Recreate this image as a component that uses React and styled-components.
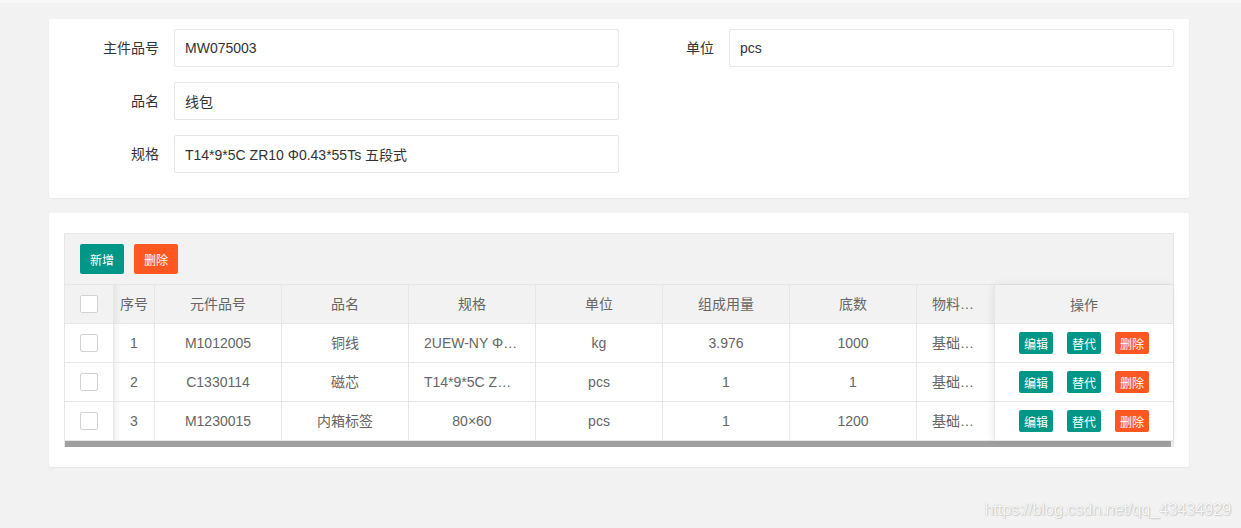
import React from "react";
import styled, { createGlobalStyle } from "styled-components";

const GlobalStyle = createGlobalStyle`
  * { box-sizing: border-box; }
  body {
    margin: 0;
    background: #f2f2f2;
    font-family: "Liberation Sans", Arial, "Noto Sans CJK SC", sans-serif;
    font-size: 14px;
    color: #333;
  }
`;

const Page = styled.div`
  position: relative;
  min-height: 528px;
`;

const TopStrip = styled.div`
  height: 3px;
  background: #f8f8f8;
`;

const Content = styled.div`
  width: 1140px;
  margin-left: 49px;
  padding-top: 16px;
  display: flex;
  flex-direction: column;
  gap: 15px;
`;

const Card = styled.div`
  background: #fff;
  border-radius: 2px;
  box-shadow: 0 1px 2px 0 rgba(0, 0, 0, 0.05);
  padding: ${(p) => p.$pad};
`;

const FormGrid = styled.div`
  display: grid;
  grid-template-columns: 1fr 1fr;
  row-gap: 15px;
  padding-bottom: 15px;
`;

const Field = styled.div`
  display: flex;
  grid-column: ${(p) => (p.$first ? "1" : "auto")};
`;

const Label = styled.label`
  width: 110px;
  padding: 9px 15px;
  line-height: 20px;
  text-align: right;
  color: #333;
`;

const Input = styled.input`
  flex: 1;
  height: 38px;
  border: 1px solid #e6e6e6;
  border-radius: 2px;
  padding-left: 10px;
  font: inherit;
  color: #333;
  background: #fff;
  outline: none;
`;

const TableBox = styled.div`
  border: 1px solid #e6e6e6;
  border-bottom: none;
`;

const Toolbar = styled.div`
  height: 51px;
  padding: 10px 15px;
  background: #f2f2f2;
  border-bottom: 1px solid #e6e6e6;
  display: flex;
  gap: 10px;
`;

const Btn = styled.button`
  height: ${(p) => (p.$xs ? "22px" : "30px")};
  padding: 0 ${(p) => (p.$xs ? "5px" : "10px")};
  border: none;
  border-radius: 2px;
  font-family: inherit;
  font-size: 12px;
  color: #fff;
  background: ${(p) => (p.$danger ? "#ff5722" : "#009688")};
  cursor: pointer;
`;

const TableBody = styled.div`
  display: flex;
`;

const Main = styled.div`
  flex: 1;
  overflow: hidden;
`;

const Row = styled.div`
  display: grid;
  grid-template-columns: 49px 41px repeat(6, 127px) 80px;
  background: ${(p) => (p.$head ? "#f2f2f2" : "#fff")};
`;

const Cell = styled.div`
  height: 39px;
  line-height: 38px;
  border-right: 1px solid #e6e6e6;
  border-bottom: 1px solid #e6e6e6;
  padding: 0 ${(p) => (p.$tight ? "0" : "15px")};
  text-align: center;
  color: #666;
  white-space: nowrap;
  overflow: hidden;
  text-overflow: ellipsis;
  background: ${(p) =>
    p.$shade ? "linear-gradient(to right, rgba(0,0,0,0.05), rgba(0,0,0,0) 7px)" : "none"};
`;

const CheckCell = styled(Cell)`
  display: flex;
  align-items: center;
  justify-content: center;
  padding: 0;
`;

const Check = styled.span`
  width: 18px;
  height: 18px;
  border: 1px solid #d2d2d2;
  border-radius: 2px;
  background: #fff;
`;

const Fixed = styled.div`
  width: 179px;
  position: relative;
  z-index: 1;
  box-shadow: -1px 0 8px rgba(0, 0, 0, 0.08);
  border-left: 1px solid #e6e6e6;
`;

const FixedCell = styled.div`
  height: 39px;
  border-bottom: 1px solid #e6e6e6;
  background: ${(p) => (p.$head ? "#f2f2f2" : "#fff")};
  color: #666;
  display: flex;
  align-items: center;
  justify-content: center;
  gap: 14px;
`;

const Scrollbar = styled.div`
  height: 6px;
  background: #f1f1f1;
`;

const Thumb = styled.div`
  height: 100%;
  width: 99.8%;
  background: #a0a0a0;
`;

const Watermark = styled.div`
  position: absolute;
  right: 10px;
  bottom: 9px;
  font-size: 16.5px;
  letter-spacing: -0.2px;
  color: rgba(255, 255, 255, 0.92);
  text-shadow: 0 0 1px rgba(0, 0, 0, 0.25), 1px 1px 1px rgba(0, 0, 0, 0.12);
`;

const headers = ["元件品号", "品名", "规格", "单位", "组成用量", "底数", "物料类型"];

const rows = [
  ["M1012005", "铜线", "2UEW-NY Φ0.43", "kg", "3.976", "1000", "基础物料"],
  ["C1330114", "磁芯", "T14*9*5C ZR10", "pcs", "1", "1", "基础物料"],
  ["M1230015", "内箱标签", "80×60", "pcs", "1", "1200", "基础物料"],
];

export default function App() {
  return (
    <Page>
      <GlobalStyle />
      <TopStrip />
      <Content>
        <Card $pad="10px 15px">
          <FormGrid>
            <Field>
              <Label>主件品号</Label>
              <Input readOnly defaultValue="MW075003" />
            </Field>
            <Field>
              <Label>单位</Label>
              <Input readOnly defaultValue="pcs" />
            </Field>
            <Field $first>
              <Label>品名</Label>
              <Input readOnly defaultValue="线包" />
            </Field>
            <Field $first>
              <Label>规格</Label>
              <Input readOnly defaultValue="T14*9*5C ZR10 Φ0.43*55Ts 五段式" />
            </Field>
          </FormGrid>
        </Card>

        <Card $pad="20px 15px">
          <TableBox>
            <Toolbar>
              <Btn>新增</Btn>
              <Btn $danger>删除</Btn>
            </Toolbar>
            <TableBody>
              <Main>
                <Row $head>
                  <CheckCell>
                    <Check />
                  </CheckCell>
                  <Cell $tight $shade>序号</Cell>
                  {headers.map((h) => (
                    <Cell key={h}>{h}</Cell>
                  ))}
                </Row>
                {rows.map((r, i) => (
                  <Row key={r[0]}>
                    <CheckCell>
                      <Check />
                    </CheckCell>
                    <Cell $tight $shade>{i + 1}</Cell>
                    {r.map((v, j) => (
                      <Cell key={j}>{v}</Cell>
                    ))}
                  </Row>
                ))}
              </Main>
              <Fixed>
                <FixedCell $head>操作</FixedCell>
                {rows.map((r) => (
                  <FixedCell key={r[0]}>
                    <Btn $xs>编辑</Btn>
                    <Btn $xs>替代</Btn>
                    <Btn $xs $danger>删除</Btn>
                  </FixedCell>
                ))}
              </Fixed>
            </TableBody>
            <Scrollbar>
              <Thumb />
            </Scrollbar>
          </TableBox>
        </Card>
      </Content>
      <Watermark>https://blog.csdn.net/qq_43434929</Watermark>
    </Page>
  );
}
